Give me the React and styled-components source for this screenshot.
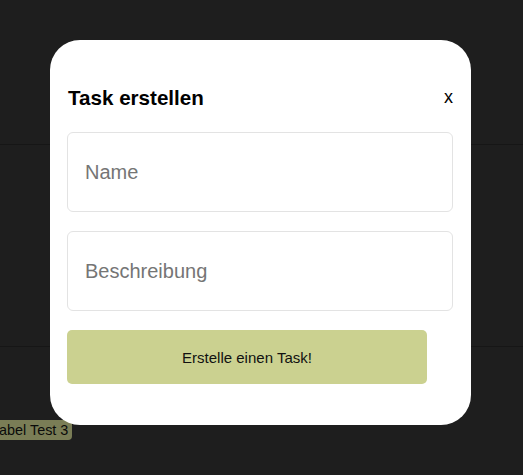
import React, { useState } from "react";
import styled, { createGlobalStyle } from "styled-components";

const GlobalStyle = createGlobalStyle`
  html, body {
    margin: 0;
    padding: 0;
    background: #323232;
    font-family: "Liberation Sans", Arial, sans-serif;
  }
  * {
    box-sizing: border-box;
  }
`;

const Board = styled.div`
  min-height: 475px;
  overflow: hidden;
`;

const Row = styled.div`
  height: ${(p) => p.$height}px;
  padding-top: ${(p) => p.$padTop || 0}px;
  border-bottom: ${(p) => (p.$last ? "none" : "1px solid #252525")};
`;

const Tag = styled.span`
  display: inline-block;
  margin-left: -12px;
  padding: 2px 4px 2px 3px;
  background: #cbd190;
  color: #111;
  font-size: 14.4px;
  line-height: 16px;
  border-radius: 4px;
`;

const Overlay = styled.div`
  position: fixed;
  inset: 0;
  background: rgba(0, 0, 0, 0.4);
  display: flex;
  justify-content: center;
  align-items: flex-start;
  padding-top: 40px;
  padding-right: 2px;
`;

const Modal = styled.div`
  width: 421px;
  background: #fff;
  border-radius: 30px;
  padding: 46px 18px 41px 17px;
`;

const Header = styled.div`
  display: flex;
  justify-content: space-between;
  align-items: center;
  height: 23px;
  margin-bottom: 23px;
`;

const Title = styled.h2`
  margin: 0 0 0 1px;
  font-size: 20.6px;
  font-weight: bold;
  color: #000;
  line-height: 23px;
`;

const CloseButton = styled.button`
  border: none;
  background: none;
  padding: 0;
  font-family: inherit;
  font-size: 18px;
  color: #000;
  cursor: pointer;
  line-height: 23px;
  margin-top: -1px;
`;

const Form = styled.form`
  display: flex;
  flex-direction: column;
  align-items: flex-start;
  gap: 19px;
`;

const Field = styled.input`
  width: 386px;
  height: 80px;
  padding: 0 17px;
  border: 1px solid #e3e3e3;
  border-radius: 6px;
  font-family: inherit;
  font-size: 20px;
  color: #222;
  outline: none;

  &::placeholder {
    color: #757575;
  }
`;

const Submit = styled.button`
  width: 360px;
  height: 54px;
  border: none;
  border-radius: 5px;
  background: #cbd190;
  color: #111;
  font-family: inherit;
  font-size: 15px;
  cursor: pointer;
`;

export default function App() {
  const [name, setName] = useState("");
  const [description, setDescription] = useState("");

  return (
    <>
      <GlobalStyle />
      <Board>
        <Row $height={145} />
        <Row $height={202} />
        <Row $height={128} $padTop={73} $last>
          <Tag>Label Test 3</Tag>
        </Row>
      </Board>
      <Overlay>
        <Modal>
          <Header>
            <Title>Task erstellen</Title>
            <CloseButton type="button">x</CloseButton>
          </Header>
          <Form onSubmit={(e) => e.preventDefault()}>
            <Field
              placeholder="Name"
              value={name}
              onChange={(e) => setName(e.target.value)}
            />
            <Field
              placeholder="Beschreibung"
              value={description}
              onChange={(e) => setDescription(e.target.value)}
            />
            <Submit type="submit">Erstelle einen Task!</Submit>
          </Form>
        </Modal>
      </Overlay>
    </>
  );
}
